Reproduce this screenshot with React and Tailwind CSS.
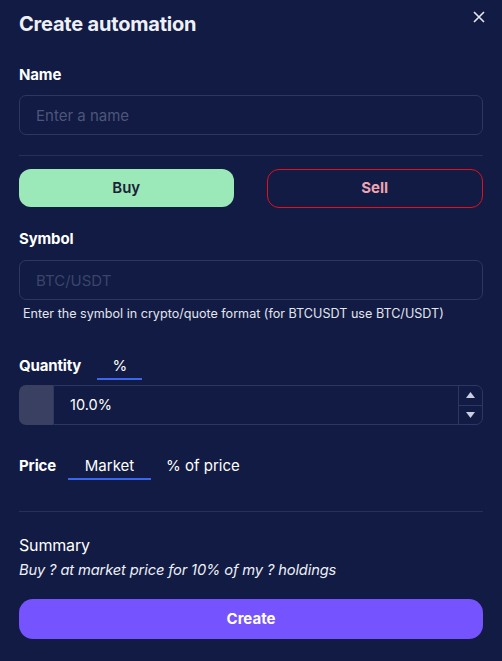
import React, { useState } from 'react';

export default function App() {
  const [side, setSide] = useState('buy');
  const [name, setName] = useState('');
  const [symbol, setSymbol] = useState('');
  const [qty, setQty] = useState('10.0%');

  return (
    <div className="min-h-[661px] w-[502px] bg-[#111b44] text-white font-['Inter',sans-serif]">
      <div className="relative px-[19px] pt-[12px] pb-[22px]">
        <button className="absolute right-[17px] top-[11px] text-[#e6e8f0]" aria-label="Close">
          <svg width="12" height="12" viewBox="0 0 12 12" fill="none" stroke="currentColor" strokeWidth="1.6">
            <path d="M1 1l10 10M11 1L1 11" />
          </svg>
        </button>

        <h1 className="text-[20px] font-bold leading-[24px] tracking-[-0.01em] text-[#eef0f6]">Create automation</h1>

        <label className="mt-[30px] block text-[15px] font-bold leading-[18px] tracking-[-0.01em]">Name</label>
        <input
          value={name}
          onChange={e => setName(e.target.value)}
          placeholder="Enter a name"
          className="mt-[11px] h-[40px] w-full rounded-[7px] border border-[#2c3763] bg-transparent px-[16px] text-[15px] text-white outline-none placeholder:text-[#4d5679]"
        />

        <div className="mt-[20px] h-px w-full bg-[#26305a]" />

        <div className="mt-[13px] flex gap-[33px]">
          <button
            onClick={() => setSide('buy')}
            className="h-[38px] flex-1 rounded-[12px] bg-[#9be8b8] text-[15px] font-semibold text-[#1b2238]"
          >
            Buy
          </button>
          <button
            onClick={() => setSide('sell')}
            className="h-[39px] flex-1 rounded-[12px] border border-[#e3101e] text-[15px] font-bold text-[#eea4b3]"
          >
            Sell
          </button>
        </div>

        <label className="mt-[22px] block text-[15px] font-bold leading-[18px] tracking-[-0.01em]">Symbol</label>
        <input
          value={symbol}
          onChange={e => setSymbol(e.target.value)}
          placeholder="BTC/USDT"
          className="mt-[12px] h-[40px] w-full rounded-[7px] border border-[#2c3763] bg-transparent px-[16px] text-[15px] text-white outline-none placeholder:text-[#3c4569]"
        />
        <p className="mt-[5px] pl-[4px] text-[12.6px] leading-[18px] text-[#e2e5ee]">
          Enter the symbol in crypto/quote format (for BTCUSDT use BTC/USDT)
        </p>

        <div className="mt-[34px] flex items-end gap-[16px]">
          <span className="pb-[5px] text-[15px] font-bold leading-[18px] tracking-[-0.01em]">Quantity</span>
          <span className="w-[45px] border-b-2 border-[#3a67f0] pb-[3px] text-center text-[15px] leading-[18px]">%</span>
        </div>

        <div className="mt-[5px] flex h-[40px]">
          <div className="w-[34px] rounded-l-[7px] bg-[#3a4061]" />
          <div className="flex flex-1 rounded-r-[7px] border border-[#2c3763]">
            <input
              value={qty}
              onChange={e => setQty(e.target.value)}
              className="min-w-0 flex-1 bg-transparent px-[16px] text-[14.5px] text-white outline-none"
            />
            <div className="flex w-[24px] flex-col border-l border-[#2c3763]">
              <button className="flex flex-1 items-center justify-center border-b border-[#2c3763]">
                <svg width="9" height="6" viewBox="0 0 9 6"><path d="M4.5 0L9 6H0z" fill="#c9cde0" /></svg>
              </button>
              <button className="flex flex-1 items-center justify-center">
                <svg width="9" height="6" viewBox="0 0 9 6"><path d="M0 0h9L4.5 6z" fill="#c9cde0" /></svg>
              </button>
            </div>
          </div>
        </div>

        <div className="mt-[32px] flex items-end">
          <span className="pb-[5px] text-[15px] font-bold leading-[18px] tracking-[-0.01em]">Price</span>
          <span className="ml-[12px] w-[83px] border-b-2 border-[#3a67f0] pb-[3px] text-center text-[15px] leading-[18px]">Market</span>
          <span className="ml-[15px] pb-[5px] text-[15px] leading-[18px]">% of price</span>
        </div>

        <div className="mt-[31px] h-px w-full bg-[#26305a]" />

        <h2 className="mt-[23px] text-[16px] leading-[20px] tracking-[-0.01em]">Summary</h2>
        <p className="mt-[6px] text-[14.7px] italic leading-[18px] tracking-[-0.01em] text-[#eef0f6]">
          {side === 'buy' ? 'Buy' : 'Sell'} ? at market price for 10% of my ? holdings
        </p>

        <button className="mt-[20px] h-[40px] w-full rounded-[14px] bg-[#7553ff] text-[15px] font-bold text-white">
          Create
        </button>
      </div>
    </div>
  );
}
